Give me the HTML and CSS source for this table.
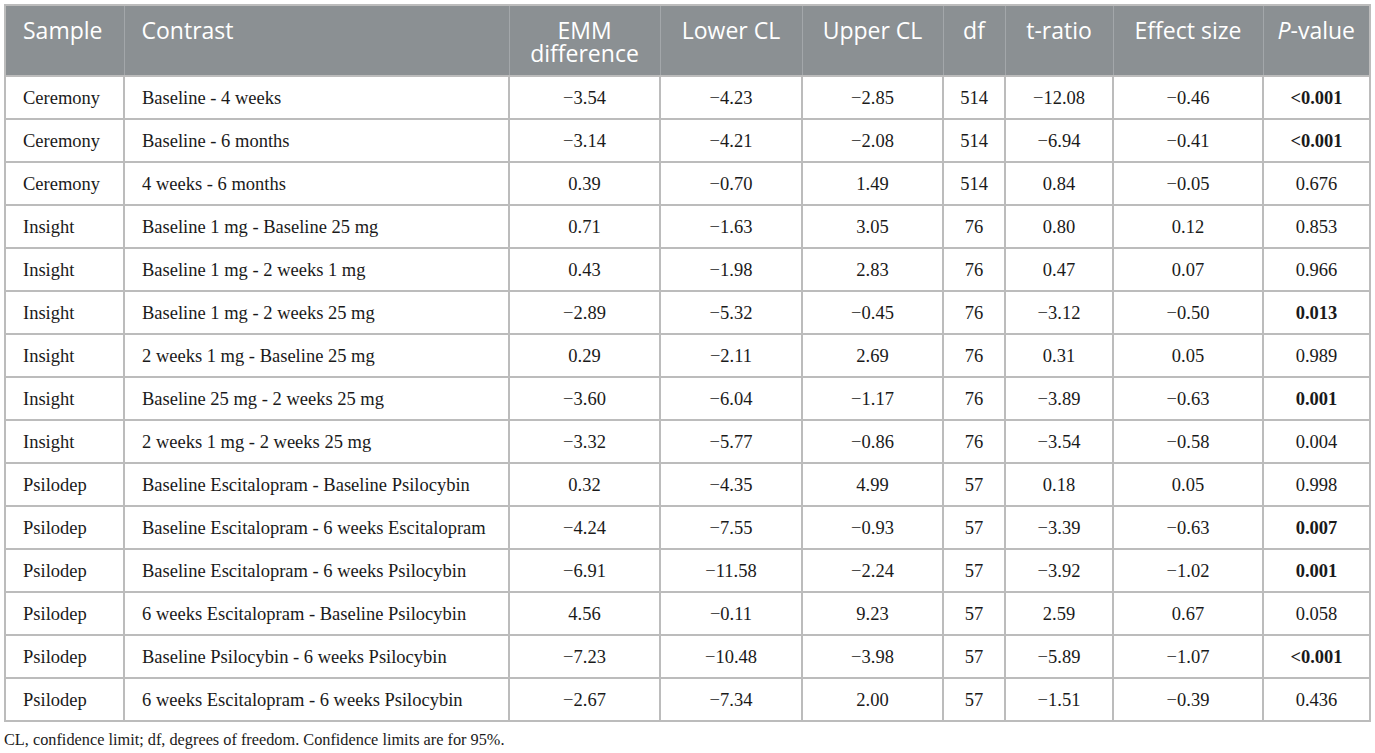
FILE: index.html
```html
<!DOCTYPE html>
<html lang="en">
<head>
  <meta charset="UTF-8">
  <title>EMM contrasts</title>
  <link rel="stylesheet" href="styles.css">
</head>
<body>
  <table class="results">
    <colgroup>
      <col class="c-sample">
      <col class="c-contrast">
      <col class="c-emm">
      <col class="c-lower">
      <col class="c-upper">
      <col class="c-df">
      <col class="c-t">
      <col class="c-effect">
      <col class="c-p">
    </colgroup>
    <thead>
      <tr>
        <th class="left">Sample</th>
        <th class="left">Contrast</th>
        <th>EMM difference</th>
        <th>Lower CL</th>
        <th>Upper CL</th>
        <th>df</th>
        <th>t-ratio</th>
        <th>Effect size</th>
        <th><i>P</i>-value</th>
      </tr>
    </thead>
    <tbody>
      <tr><td class="left">Ceremony</td><td class="left">Baseline - 4 weeks</td><td>&minus;3.54</td><td>&minus;4.23</td><td>&minus;2.85</td><td>514</td><td>&minus;12.08</td><td>&minus;0.46</td><td class="sig">&lt;0.001</td></tr>
      <tr><td class="left">Ceremony</td><td class="left">Baseline - 6 months</td><td>&minus;3.14</td><td>&minus;4.21</td><td>&minus;2.08</td><td>514</td><td>&minus;6.94</td><td>&minus;0.41</td><td class="sig">&lt;0.001</td></tr>
      <tr><td class="left">Ceremony</td><td class="left">4 weeks - 6 months</td><td>0.39</td><td>&minus;0.70</td><td>1.49</td><td>514</td><td>0.84</td><td>&minus;0.05</td><td>0.676</td></tr>
      <tr><td class="left">Insight</td><td class="left">Baseline 1 mg - Baseline 25 mg</td><td>0.71</td><td>&minus;1.63</td><td>3.05</td><td>76</td><td>0.80</td><td>0.12</td><td>0.853</td></tr>
      <tr><td class="left">Insight</td><td class="left">Baseline 1 mg - 2 weeks 1 mg</td><td>0.43</td><td>&minus;1.98</td><td>2.83</td><td>76</td><td>0.47</td><td>0.07</td><td>0.966</td></tr>
      <tr><td class="left">Insight</td><td class="left">Baseline 1 mg - 2 weeks 25 mg</td><td>&minus;2.89</td><td>&minus;5.32</td><td>&minus;0.45</td><td>76</td><td>&minus;3.12</td><td>&minus;0.50</td><td class="sig">0.013</td></tr>
      <tr><td class="left">Insight</td><td class="left">2 weeks 1 mg - Baseline 25 mg</td><td>0.29</td><td>&minus;2.11</td><td>2.69</td><td>76</td><td>0.31</td><td>0.05</td><td>0.989</td></tr>
      <tr><td class="left">Insight</td><td class="left">Baseline 25 mg - 2 weeks 25 mg</td><td>&minus;3.60</td><td>&minus;6.04</td><td>&minus;1.17</td><td>76</td><td>&minus;3.89</td><td>&minus;0.63</td><td class="sig">0.001</td></tr>
      <tr><td class="left">Insight</td><td class="left">2 weeks 1 mg - 2 weeks 25 mg</td><td>&minus;3.32</td><td>&minus;5.77</td><td>&minus;0.86</td><td>76</td><td>&minus;3.54</td><td>&minus;0.58</td><td>0.004</td></tr>
      <tr><td class="left">Psilodep</td><td class="left">Baseline Escitalopram - Baseline Psilocybin</td><td>0.32</td><td>&minus;4.35</td><td>4.99</td><td>57</td><td>0.18</td><td>0.05</td><td>0.998</td></tr>
      <tr><td class="left">Psilodep</td><td class="left">Baseline Escitalopram - 6 weeks Escitalopram</td><td>&minus;4.24</td><td>&minus;7.55</td><td>&minus;0.93</td><td>57</td><td>&minus;3.39</td><td>&minus;0.63</td><td class="sig">0.007</td></tr>
      <tr><td class="left">Psilodep</td><td class="left">Baseline Escitalopram - 6 weeks Psilocybin</td><td>&minus;6.91</td><td>&minus;11.58</td><td>&minus;2.24</td><td>57</td><td>&minus;3.92</td><td>&minus;1.02</td><td class="sig">0.001</td></tr>
      <tr><td class="left">Psilodep</td><td class="left">6 weeks Escitalopram - Baseline Psilocybin</td><td>4.56</td><td>&minus;0.11</td><td>9.23</td><td>57</td><td>2.59</td><td>0.67</td><td>0.058</td></tr>
      <tr><td class="left">Psilodep</td><td class="left">Baseline Psilocybin - 6 weeks Psilocybin</td><td>&minus;7.23</td><td>&minus;10.48</td><td>&minus;3.98</td><td>57</td><td>&minus;5.89</td><td>&minus;1.07</td><td class="sig">&lt;0.001</td></tr>
      <tr><td class="left">Psilodep</td><td class="left">6 weeks Escitalopram - 6 weeks Psilocybin</td><td>&minus;2.67</td><td>&minus;7.34</td><td>2.00</td><td>57</td><td>&minus;1.51</td><td>&minus;0.39</td><td>0.436</td></tr>
    </tbody>
  </table>
  <p class="note">CL, confidence limit; df, degrees of freedom. Confidence limits are for 95%.</p>
</body>
</html>
```

FILE: styles.css
```css
body {
  margin: 4px;
  background: #fff;
  font-family: "Liberation Serif", "Times New Roman", serif;
  color: #1a1a1a;
}
.results {
  width: 1365px;
  table-layout: fixed;
  border-collapse: collapse;
  border: 2px solid #bcbcbc;
}
.c-sample { width: 119px; }
.c-contrast { width: 385px; }
.c-emm { width: 151px; }
.c-lower { width: 142px; }
.c-upper { width: 141px; }
.c-df { width: 62px; }
.c-t { width: 108px; }
.c-effect { width: 150px; }
.c-p { width: 107px; }
.results th {
  background: #8b9093;
  color: #fff;
  font-family: "Open Sans", "DejaVu Sans", sans-serif;
  font-weight: 400;
  font-size: 23px;
  line-height: 23px;
  height: 71px;
  padding: 13px 4px 0;
  vertical-align: top;
  text-align: center;
  border-left: 1px solid #a3a7aa;
  box-sizing: border-box;
}
.results th:first-child {
  border-left: none;
}
.results td {
  height: 43px;
  padding: 2px 6px 0;
  font-size: 18.5px;
  text-align: center;
  vertical-align: middle;
  border: 2px solid #bcbcbc;
  box-sizing: border-box;
}
.results .left {
  text-align: left;
  padding-left: 17px;
}
.results td.sig {
  font-weight: bold;
}
.note {
  margin: 8px 0 0;
  font-size: 16.3px;
  color: #1a1a1a;
}
```
